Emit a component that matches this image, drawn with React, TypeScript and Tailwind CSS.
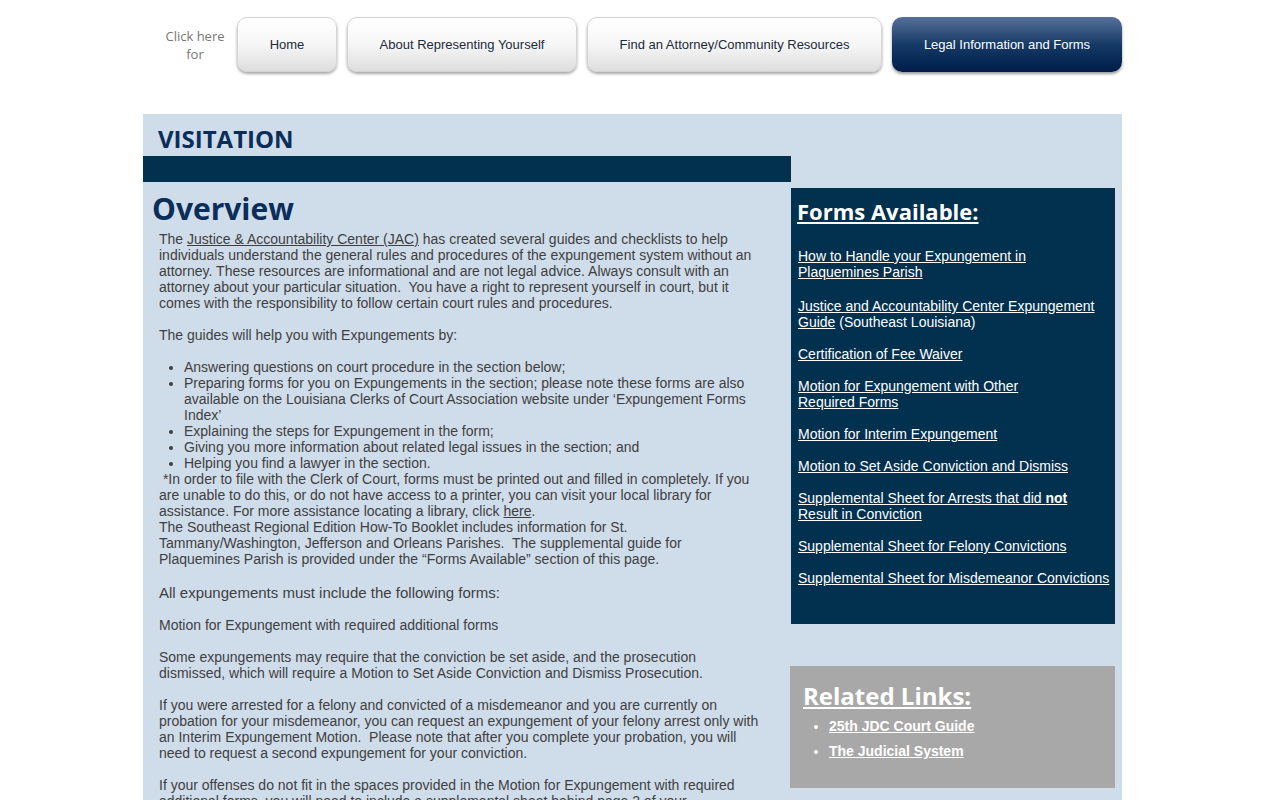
import React from 'react';

const navButtons = [
  { label: 'Home', width: 'w-[100px]' },
  { label: 'About Representing Yourself', width: 'w-[230px]' },
  { label: 'Find an Attorney/Community Resources', width: 'w-[295px]' },
];

function NavButton({ label, width }: { label: string; width: string }) {
  return (
    <a
      href="#"
      className={`${width} h-[55px] flex items-center justify-center rounded-[10px] border border-[#d4d4d4] bg-gradient-to-b from-white via-[#f6f6f6] to-[#dedede] shadow-[0_2px_3px_rgba(0,0,0,0.35)] text-[13px] text-[#1b2a3c]`}
    >
      {label}
    </a>
  );
}

const forms: React.ReactNode[] = [
  <>
    <a href="#" className="underline">How to Handle your Expungement in</a>
    <br />
    <a href="#" className="underline">Plaquemines Parish</a>
  </>,
  <>
    <a href="#" className="underline">Justice and Accountability Center Expungement</a>
    <br />
    <a href="#" className="underline">Guide</a> (Southeast Louisiana)
  </>,
  <a href="#" className="underline">Certification of Fee Waiver</a>,
  <>
    <a href="#" className="underline">Motion for Expungement with Other</a>
    <br />
    <a href="#" className="underline">Required Forms</a>
  </>,
  <a href="#" className="underline">Motion for Interim Expungement</a>,
  <a href="#" className="underline">Motion to Set Aside Conviction and Dismiss</a>,
  <>
    <a href="#" className="underline">
      Supplemental Sheet for Arrests that did <b>not</b>
    </a>
    <br />
    <a href="#" className="underline">Result in Conviction</a>
  </>,
  <a href="#" className="underline">Supplemental Sheet for Felony Convictions</a>,
  <a href="#" className="underline">Supplemental Sheet for Misdemeanor Convictions</a>,
];

export default function App() {
  const arial = { fontFamily: '"Liberation Sans", Arial, sans-serif' };
  const openSans = { fontFamily: '"Open Sans", "Noto Sans", sans-serif' };

  return (
    <div className="min-h-[800px] bg-white" style={arial}>
      {/* top navigation */}
      <nav className="flex items-center pt-[17px] pl-[160px]">
        <div className="w-[70px] mr-[7px] text-center text-[13px] leading-[18px] text-[#777]" style={openSans}>
          Click here
          <br />
          for
        </div>
        <div className="flex gap-[10px]">
          {navButtons.map((b) => (
            <NavButton key={b.label} {...b} />
          ))}
          <a
            href="#"
            className="w-[230px] h-[55px] flex items-center justify-center rounded-[10px] bg-gradient-to-b from-[#56719a] via-[#163a66] to-[#001d48] shadow-[0_2px_3px_rgba(0,0,0,0.4)] text-[13px] text-white"
          >
            Legal Information and Forms
          </a>
        </div>
      </nav>

      {/* main panel */}
      <main className="ml-[143px] mt-[42px] w-[979px] min-h-[686px] bg-[#cfdcea] flex">
        <section className="w-[648px]">
          <h1 className="pl-[15px] pt-[9px] h-[42px] text-[24px] leading-[32px] font-bold text-[#0b2d5a]" style={openSans}>
            VISITATION
          </h1>
          <div className="h-[26px] bg-[#02304f]" />

          <h2 className="pl-[9px] pt-[4px] text-[30px] leading-[45px] font-bold text-[#0b2d5a]" style={openSans}>
            Overview
          </h2>

          <div className="pl-[16px] text-[14px] leading-[16px] text-[#3f3f3f] whitespace-nowrap">
            <p>
              The <a href="#" className="underline">Justice &amp; Accountability Center (JAC)</a> has created several guides and checklists to help
              <br />
              individuals understand the general rules and procedures of the expungement system without an
              <br />
              attorney. These resources are informational and are not legal advice. Always consult with an
              <br />
              attorney about your particular situation.&nbsp; You have a right to represent yourself in court, but it
              <br />
              comes with the responsibility to follow certain court rules and procedures.
            </p>
            <p className="mt-[16px]">The guides will help you with Expungements by:</p>
            <ul className="mt-[16px] pl-[25px] list-disc">
              <li>Answering questions on court procedure in the section below;</li>
              <li>
                Preparing forms for you on Expungements in the section; please note these forms are also
                <br />
                available on the Louisiana Clerks of Court Association website under ‘Expungement Forms
                <br />
                Index’
              </li>
              <li>Explaining the steps for Expungement in the form;</li>
              <li>Giving you more information about related legal issues in the section; and</li>
              <li>Helping you find a lawyer in the section.</li>
            </ul>
            <p>
              &nbsp;*In order to file with the Clerk of Court, forms must be printed out and filled in completely. If you
              <br />
              are unable to do this, or do not have access to a printer, you can visit your local library for
              <br />
              assistance. For more assistance locating a library, click <a href="#" className="underline">here</a>.
              <br />
              The Southeast Regional Edition How-To Booklet includes information for St.
              <br />
              Tammany/Washington, Jefferson and Orleans Parishes.&nbsp; The supplemental guide for
              <br />
              Plaquemines Parish is provided under the “Forms Available” section of this page.
            </p>
            <p className="mt-[17px] text-[15px] leading-[17px]">All expungements must include the following forms:</p>
            <p className="mt-[16px]">Motion for Expungement with required additional forms</p>
            <p className="mt-[16px]">
              Some expungements may require that the conviction be set aside, and the prosecution
              <br />
              dismissed, which will require a Motion to Set Aside Conviction and Dismiss Prosecution.
            </p>
            <p className="mt-[16px]">
              If you were arrested for a felony and convicted of a misdemeanor and you are currently on
              <br />
              probation for your misdemeanor, you can request an expungement of your felony arrest only with
              <br />
              an Interim Expungement Motion.&nbsp; Please note that after you complete your probation, you will
              <br />
              need to request a second expungement for your conviction.
            </p>
            <p className="mt-[16px]">
              If your offenses do not fit in the spaces provided in the Motion for Expungement with required
              <br />
              additional forms, you will need to include a supplemental sheet behind page 2 of your
            </p>
          </div>
        </section>

        {/* sidebar */}
        <aside className="w-[324px] pt-[74px]">
          <div className="h-[436px] bg-[#02304f] text-white pl-[6px] pt-[8px]">
            <h3 className="text-[22px] leading-[30px] font-bold underline" style={openSans}>
              Forms Available:
            </h3>
            <ul className="mt-[22px] pl-[1px] text-[14px] leading-[16px] flex flex-col gap-[16px] whitespace-nowrap">
              {forms.map((f, i) => (
                <li key={i} className={i === 0 ? 'mb-[2px]' : ''}>
                  {f}
                </li>
              ))}
            </ul>
          </div>

          <div className="mt-[42px] -ml-[1px] w-[325px] h-[122px] bg-[#a9a8a8] text-white pl-[13px] pt-[13px]">
            <h3 className="text-[24px] leading-[33px] font-bold underline" style={openSans}>
              Related Links:
            </h3>
            <ul className="mt-[2px] pl-[26px] list-disc text-[14px] leading-[25px] font-bold">
              <li>
                <a href="#" className="underline">25th JDC Court Guide</a>
              </li>
              <li>
                <a href="#" className="underline">The Judicial System</a>
              </li>
            </ul>
          </div>
        </aside>
      </main>
    </div>
  );
}
